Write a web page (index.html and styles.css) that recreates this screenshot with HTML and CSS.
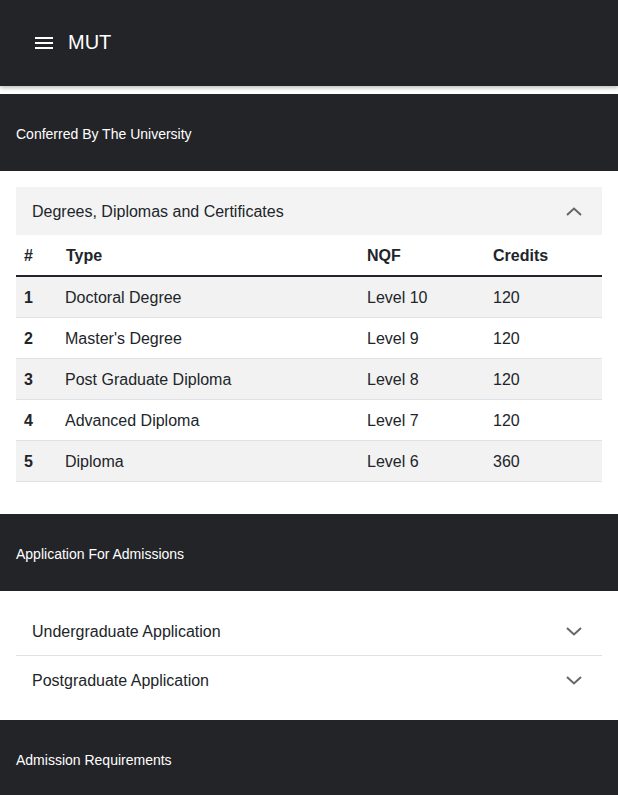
FILE: index.html
```html
<!DOCTYPE html>
<html lang="en">
<head>
<meta charset="utf-8">
<title>MUT</title>
<link rel="stylesheet" href="styles.css">
</head>
<body>
<header class="topbar">
  <span class="burger" aria-hidden="true"><i></i><i></i><i></i></span>
  <span class="brand">MUT</span>
</header>

<section class="band"><h2>Conferred By The University</h2></section>

<div class="panel">
  <div class="acc-head open">
    <span>Degrees, Diplomas and Certificates</span>
    <svg class="chev" width="16" height="9" viewBox="0 0 16 9"><path d="M1 8 L8 1.5 L15 8" fill="none" stroke="#666" stroke-width="2"/></svg>
  </div>
  <table class="grid">
    <colgroup><col class="c1"><col class="c2"><col class="c3"><col class="c4"></colgroup>
    <thead>
      <tr><th>#</th><th>Type</th><th>NQF</th><th>Credits</th></tr>
    </thead>
    <tbody>
      <tr><th>1</th><td>Doctoral Degree</td><td>Level 10</td><td>120</td></tr>
      <tr><th>2</th><td>Master's Degree</td><td>Level 9</td><td>120</td></tr>
      <tr><th>3</th><td>Post Graduate Diploma</td><td>Level 8</td><td>120</td></tr>
      <tr><th>4</th><td>Advanced Diploma</td><td>Level 7</td><td>120</td></tr>
      <tr><th>5</th><td>Diploma</td><td>Level 6</td><td>360</td></tr>
    </tbody>
  </table>
</div>

<section class="band"><h2>Application For Admissions</h2></section>

<div class="panel panel-list">
  <div class="acc-item">
    <span>Undergraduate Application</span>
    <svg class="chev" width="16" height="9" viewBox="0 0 16 9"><path d="M1 1 L8 7.5 L15 1" fill="none" stroke="#666" stroke-width="2"/></svg>
  </div>
  <div class="acc-item last">
    <span>Postgraduate Application</span>
    <svg class="chev" width="16" height="9" viewBox="0 0 16 9"><path d="M1 1 L8 7.5 L15 1" fill="none" stroke="#666" stroke-width="2"/></svg>
  </div>
</div>

<section class="band"><h2>Admission Requirements</h2></section>
</body>
</html>
```

FILE: styles.css
```css
* { box-sizing: border-box; }
html, body { margin: 0; padding: 0; }
body {
  font-family: "Liberation Sans", Arial, sans-serif;
  color: #212529;
  background: #fff;
  font-size: 16px;
}

.topbar {
  height: 86px;
  background: #232428;
  display: flex;
  align-items: center;
  padding-left: 35px;
  box-shadow: 0 2px 4px rgba(0,0,0,0.25);
  position: relative;
  z-index: 1;
  margin-bottom: 8px;
}
.burger {
  width: 18px;
  height: 12px;
  display: flex;
  flex-direction: column;
  justify-content: space-between;
  margin-top: -1px;
}
.burger i {
  display: block;
  height: 2px;
  background: #fff;
}
.brand {
  color: #fff;
  font-size: 20px;
  margin-left: 15px;
  line-height: 1;
  margin-top: -3px;
}

.band {
  background: #232428;
  height: 77px;
  display: flex;
  align-items: center;
  padding: 2px 16px 0;
}
.band h2 {
  margin: 0;
  color: #fff;
  font-size: 14px;
  font-weight: normal;
}

.panel {
  padding: 16px 16px 16px;
}
.acc-head {
  height: 48px;
  background: #f3f3f3;
  display: flex;
  align-items: center;
  justify-content: space-between;
  padding: 2px 20px 0 16px;
}
.acc-head span, .acc-item span {
  font-size: 16px;
  color: #212529;
}
.acc-head .chev { margin-top: -2px; }
.chev { display: block; }

.grid {
  width: 100%;
  border-collapse: collapse;
  margin-bottom: 16px;
  table-layout: fixed;
}
.grid .c1 { width: 42px; }
.grid .c2 { width: 301px; }
.grid .c3 { width: 126px; }
.grid .c4 { width: 117px; }
.grid th, .grid td {
  text-align: left;
  padding: 9px 8px 7px;
  line-height: 24px;
  font-size: 16px;
  border-bottom: 1px solid #dee2e6;
}
.grid td:nth-child(2) { padding-left: 7px; }
.grid th { font-weight: bold; }
.grid thead th {
  border-bottom: 2px solid #212529;
}
.grid tbody tr:nth-child(odd) { background: #f2f2f2; }

.panel-list { padding: 16px; }
.acc-item {
  height: 49px;
  display: flex;
  align-items: center;
  justify-content: space-between;
  padding: 2px 20px 0 16px;
  border-bottom: 1px solid #dee2e6;
}
.acc-item .chev { margin-top: -2px; }
.acc-item.last { border-bottom: none; height: 48px; }
```
